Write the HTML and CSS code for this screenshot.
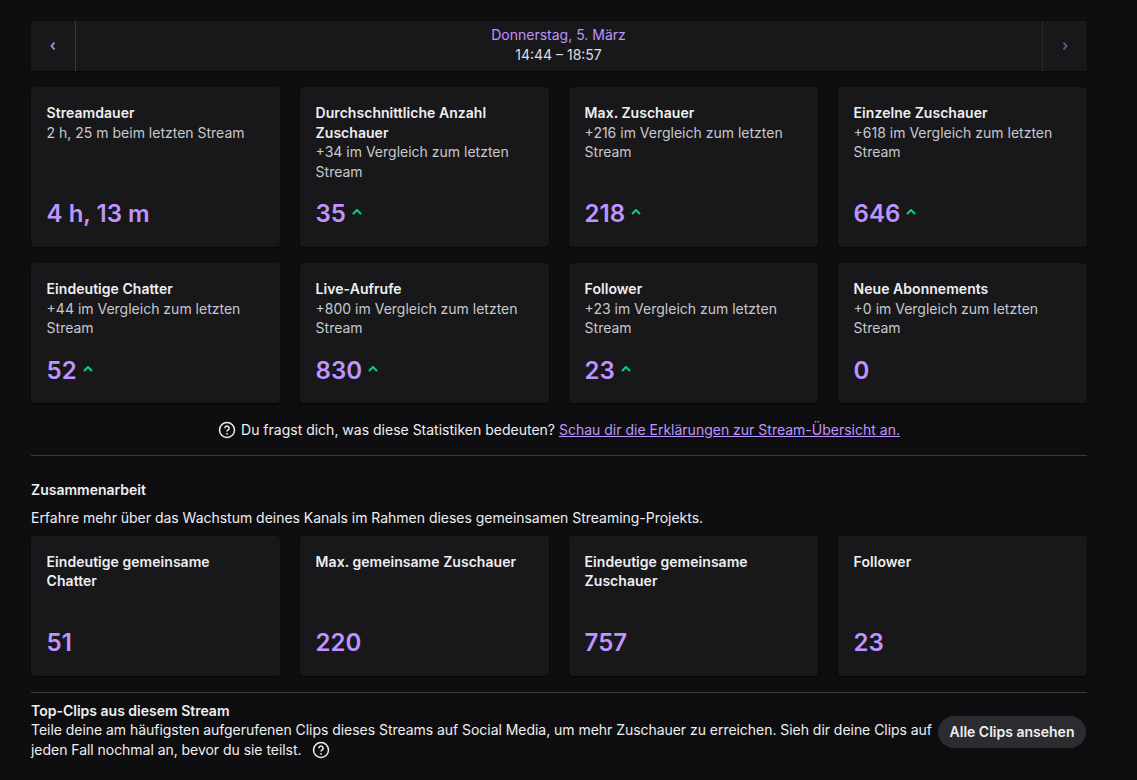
FILE: index.html
```html
<!DOCTYPE html>
<html lang="de">
<head>
    <meta charset="UTF-8">
    <title>Stream-Übersicht</title>
    <link rel="stylesheet" href="styles.css">
</head>
<body>
    <div class="page">
        <div class="datebar">
            <div class="datebar-btn">
                <svg class="chev" viewBox="0 0 8 12"><path d="M5.5 2.5 2.5 6l3 3.5" /></svg>
            </div>
            <div class="datebar-mid">
                <div class="date">Donnerstag, 5. März</div>
                <div class="time">14:44 – 18:57</div>
            </div>
            <div class="datebar-btn next">
                <svg class="chev" viewBox="0 0 8 12"><path d="M2.5 2.5 5.5 6l-3 3.5" /></svg>
            </div>
        </div>

        <div class="cards first">
            <div class="card">
                <div class="card-title">Streamdauer</div>
                <div class="card-sub">2 h, 25 m beim letzten Stream</div>
                <div class="card-value">4 h, 13 m</div>
            </div>
            <div class="card">
                <div class="card-title">Durchschnittliche Anzahl Zuschauer</div>
                <div class="card-sub">+34 im Vergleich zum letzten Stream</div>
                <div class="card-value">35<svg class="up" viewBox="0 0 10 6"><path d="M1 5l4-4 4 4" /></svg></div>
            </div>
            <div class="card">
                <div class="card-title">Max. Zuschauer</div>
                <div class="card-sub">+216 im Vergleich zum letzten Stream</div>
                <div class="card-value">218<svg class="up" viewBox="0 0 10 6"><path d="M1 5l4-4 4 4" /></svg></div>
            </div>
            <div class="card">
                <div class="card-title">Einzelne Zuschauer</div>
                <div class="card-sub">+618 im Vergleich zum letzten Stream</div>
                <div class="card-value">646<svg class="up" viewBox="0 0 10 6"><path d="M1 5l4-4 4 4" /></svg></div>
            </div>
        </div>

        <div class="cards second">
            <div class="card">
                <div class="card-title">Eindeutige Chatter</div>
                <div class="card-sub">+44 im Vergleich zum letzten Stream</div>
                <div class="card-value">52<svg class="up" viewBox="0 0 10 6"><path d="M1 5l4-4 4 4" /></svg></div>
            </div>
            <div class="card">
                <div class="card-title">Live-Aufrufe</div>
                <div class="card-sub">+800 im Vergleich zum letzten Stream</div>
                <div class="card-value">830<svg class="up" viewBox="0 0 10 6"><path d="M1 5l4-4 4 4" /></svg></div>
            </div>
            <div class="card">
                <div class="card-title">Follower</div>
                <div class="card-sub">+23 im Vergleich zum letzten Stream</div>
                <div class="card-value">23<svg class="up" viewBox="0 0 10 6"><path d="M1 5l4-4 4 4" /></svg></div>
            </div>
            <div class="card">
                <div class="card-title">Neue Abonnements</div>
                <div class="card-sub">+0 im Vergleich zum letzten Stream</div>
                <div class="card-value">0</div>
            </div>
        </div>

        <div class="hint">
            <svg class="help" viewBox="0 0 18 18">
                <circle cx="9" cy="9" r="7.5" />
                <path d="M6.9 7.2a2.1 2.1 0 1 1 3.3 1.7c-.7.5-1.2.9-1.2 1.7" />
                <circle class="dot" cx="9" cy="12.8" r=".9" />
            </svg>
            <span>Du fragst dich, was diese Statistiken bedeuten? <a href="#">Schau dir die Erklärungen zur Stream-Übersicht an.</a></span>
        </div>

        <div class="collab">
            <div class="section-title">Zusammenarbeit</div>
            <div class="collab-text">Erfahre mehr über das Wachstum deines Kanals im Rahmen dieses gemeinsamen Streaming-Projekts.</div>
            <div class="cards second">
                <div class="card">
                    <div class="card-title">Eindeutige gemeinsame Chatter</div>
                    <div class="card-value">51</div>
                </div>
                <div class="card">
                    <div class="card-title">Max. gemeinsame Zuschauer</div>
                    <div class="card-value">220</div>
                </div>
                <div class="card">
                    <div class="card-title">Eindeutige gemeinsame Zuschauer</div>
                    <div class="card-value">757</div>
                </div>
                <div class="card">
                    <div class="card-title">Follower</div>
                    <div class="card-value">23</div>
                </div>
            </div>
        </div>

        <div class="clips">
            <div class="clips-text">
                <div class="section-title">Top-Clips aus diesem Stream</div>
                <div class="clips-desc">Teile deine am häufigsten aufgerufenen Clips dieses Streams auf Social Media, um mehr Zuschauer zu erreichen. Sieh dir deine Clips auf jeden Fall nochmal an, bevor du sie teilst.<svg class="help inline" viewBox="0 0 18 18">
                    <circle cx="9" cy="9" r="7.5" />
                    <path d="M6.9 7.2a2.1 2.1 0 1 1 3.3 1.7c-.7.5-1.2.9-1.2 1.7" />
                    <circle class="dot" cx="9" cy="12.8" r=".9" />
                </svg></div>
            </div>
            <button class="btn">Alle Clips ansehen</button>
        </div>
    </div>
</body>
</html>
```

FILE: styles.css
```css
html,body{
    margin:0;
    padding:0;
}
body{
    background-color:#0e0e10;
    color:#efeff1;
    font:14px/19.6px Inter,"Liberation Sans",sans-serif;
    overflow:hidden;
}
.page{
    width:1056px;
    padding:21px 0 0 31px;
}

/* date bar */
.datebar{
    display:flex;
    height:50px;
    background-color:#18181b;
    box-shadow:0 1px 2px rgba(0,0,0,.6);
}
.datebar-btn{
    width:44px;
    flex:none;
    display:flex;
    align-items:center;
    justify-content:center;
    border-right:1px solid #3a3a3d;
}
.datebar-btn.next{
    border-right:0;
    border-left:1px solid #3a3a3d;
    opacity:.55;
}
.chev{
    width:8px;
    height:12px;
    fill:none;
    stroke:#b48bf2;
    stroke-width:1.8;
}
.datebar-mid{
    flex:1;
    text-align:center;
    padding:4px 1px 0 0;
}
.date{
    color:#bf94ff;
}
.time{
    color:#dedee3;
}

/* cards */
.cards{
    display:grid;
    grid-template-columns:repeat(4,249px);
    column-gap:20px;
}
.cards.first{
    margin-top:16px;
    grid-auto-rows:160px;
}
.cards.second{
    margin-top:16px;
    grid-auto-rows:140px;
}
.card{
    display:flex;
    flex-direction:column;
    padding:16px 21px 16px 15.6px;
    background-color:#18181b;
    border-radius:4px;
    box-shadow:0 1px 2px rgba(0,0,0,.6);
}
.card-title{
    font-weight:600;
    letter-spacing:.04px;
}
.card-sub{
    color:#c8c8ce;
}
.card-value{
    margin-top:auto;
    display:flex;
    align-items:center;
    color:#bf94ff;
    font-size:24px;
    line-height:33px;
    font-weight:600;
}
.cards.first .card-value,.collab .card-value{
    margin-bottom:1px;
}
.up{
    width:10px;
    height:6px;
    margin:-3px 0 0 6px;
    fill:none;
    stroke:#00d67f;
    stroke-width:2;
}

/* hint */
.hint{
    display:flex;
    align-items:center;
    justify-content:center;
    gap:5px;
    margin-top:17px;
    padding-bottom:15px;
    border-bottom:1px solid #3a3a3d;
}
.hint a,.hint a:visited{
    color:#bf94ff;
    text-decoration:underline;
}
.help{
    width:18px;
    height:18px;
    flex:none;
    fill:none;
    stroke:#efeff1;
    stroke-width:1.5;
}
.help .dot{
    fill:#efeff1;
    stroke:none;
}
.help.inline{
    margin-left:10px;
    vertical-align:-4px;
}

/* collab */
.collab{
    padding-top:24px;
}
.section-title{
    font-weight:600;
}
.collab-text{
    margin-top:9px;
    letter-spacing:-.02px;
}
.collab .cards.second{
    margin-top:8px;
}

/* clips */
.clips{
    display:flex;
    align-items:flex-start;
    margin-top:16px;
    padding-top:8px;
    border-top:1px solid #3a3a3d;
}
.clips-text{
    flex:1;
}
.clips-desc{
    letter-spacing:-.04px;
}
.btn{
    flex:none;
    width:148px;
    height:32px;
    margin:15px 1px 0 0;
    padding:0;
    border:0;
    border-radius:16px;
    background-color:#2c2c30;
    color:#efeff1;
    font:600 14px Inter,"Liberation Sans",sans-serif;
}
```
